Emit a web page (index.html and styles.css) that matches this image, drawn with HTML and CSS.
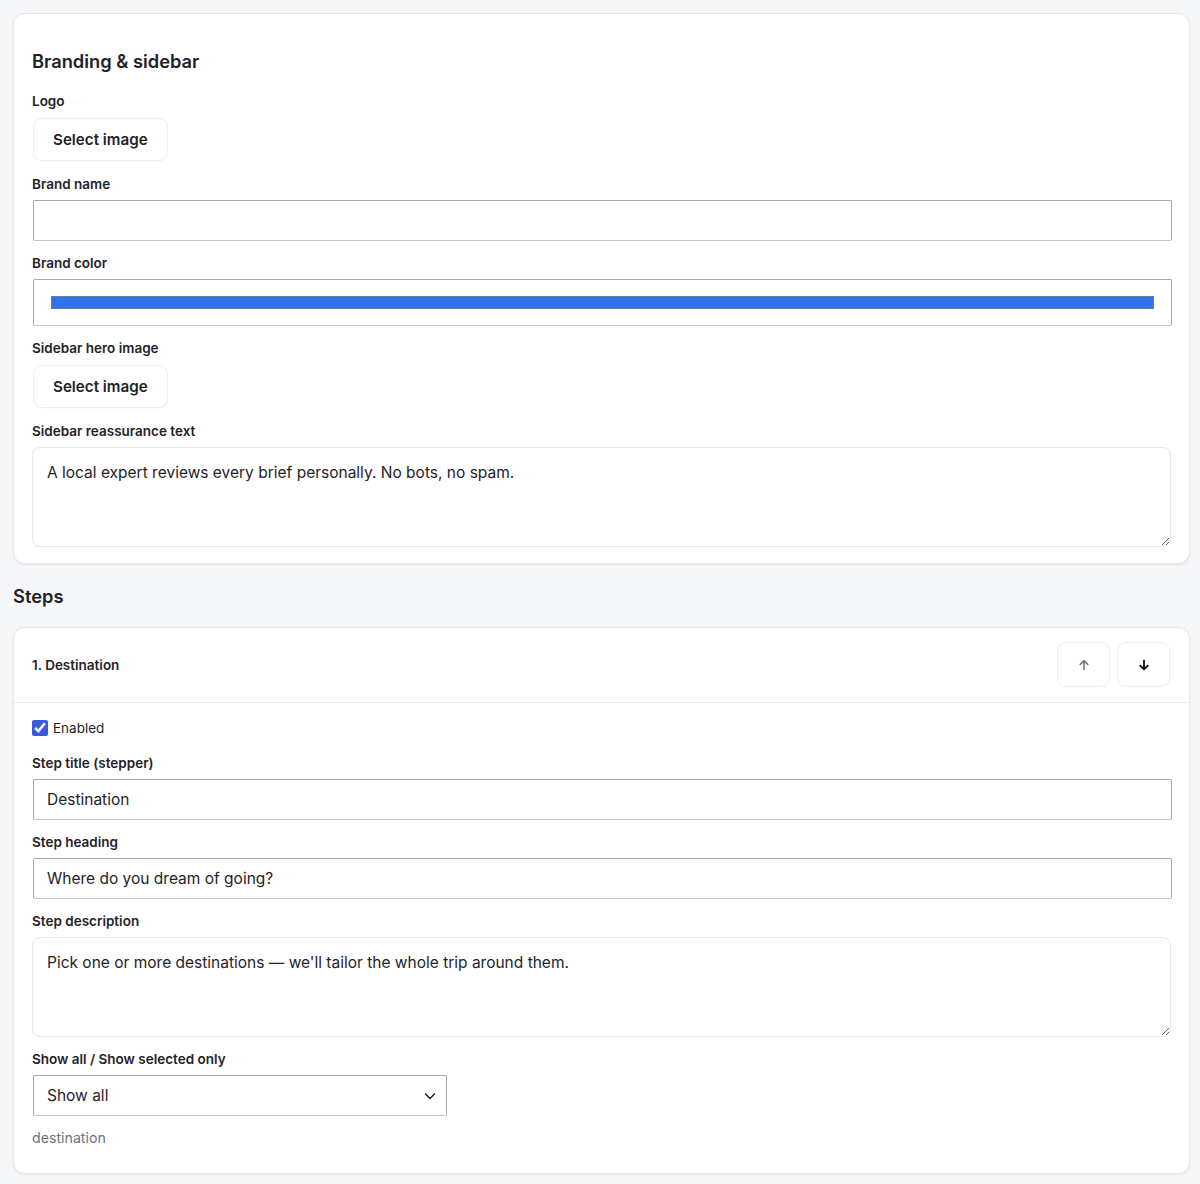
FILE: index.html
```html
<!doctype html>
<html lang="en">
<head>
    <meta charset="UTF-8">
    <meta name="viewport" content="width=device-width,initial-scale=1.0">
    <title>Form settings</title>
    <link rel="stylesheet" href="styles.css">
</head>
<body>
    <div class="page">
        <section class="card card-padded">
            <h2 class="card-title">Branding &amp; sidebar</h2>
            <div class="fields">
                <div class="field">
                    <label class="label">Logo</label>
                    <button class="btn" type="button">Select image</button>
                </div>
                <div class="field">
                    <label class="label" for="brand-name">Brand name</label>
                    <input class="input" id="brand-name" type="text">
                </div>
                <div class="field">
                    <label class="label" for="brand-color">Brand color</label>
                    <input class="color-input" id="brand-color" type="color" value="#2f74ec">
                </div>
                <div class="field">
                    <label class="label">Sidebar hero image</label>
                    <button class="btn" type="button">Select image</button>
                </div>
                <div class="field">
                    <label class="label" for="reassurance">Sidebar reassurance text</label>
                    <textarea class="textarea" id="reassurance">A local expert reviews every brief personally. No bots, no spam.</textarea>
                </div>
            </div>
        </section>

        <h2 class="section-title">Steps</h2>

        <section class="card">
            <div class="step-head">
                <span class="step-name">1. Destination</span>
                <div class="step-actions">
                    <button class="icon-btn is-disabled" type="button" aria-label="Move up">
                        <svg width="12" height="12" viewBox="0 0 12 12"><path d="M6 10.5V1.8M2.2 5.4 6 1.6l3.8 3.8" fill="none" stroke="currentColor" stroke-width="1.6" stroke-linecap="round" stroke-linejoin="round"/></svg>
                    </button>
                    <button class="icon-btn" type="button" aria-label="Move down">
                        <svg width="12" height="12" viewBox="0 0 12 12"><path d="M6 1.5v8.7M2.2 6.6 6 10.4l3.8-3.8" fill="none" stroke="currentColor" stroke-width="1.8" stroke-linecap="round" stroke-linejoin="round"/></svg>
                    </button>
                </div>
            </div>
            <div class="step-body">
                <label class="check">
                    <input type="checkbox" checked>
                    <span>Enabled</span>
                </label>
                <div class="fields">
                    <div class="field">
                        <label class="label" for="step-title">Step title (stepper)</label>
                        <input class="input" id="step-title" type="text" value="Destination">
                    </div>
                    <div class="field">
                        <label class="label" for="step-heading">Step heading</label>
                        <input class="input" id="step-heading" type="text" value="Where do you dream of going?">
                    </div>
                    <div class="field">
                        <label class="label" for="step-desc">Step description</label>
                        <textarea class="textarea" id="step-desc">Pick one or more destinations — we'll tailor the whole trip around them.</textarea>
                    </div>
                    <div class="field">
                        <label class="label" for="step-show">Show all / Show selected only</label>
                        <div class="select-wrap">
                            <select class="select" id="step-show">
                                <option>Show all</option>
                                <option>Show selected only</option>
                            </select>
                            <svg class="select-arrow" width="12" height="12" viewBox="0 0 12 12"><path d="M1.5 4l4.5 4.5L10.5 4" fill="none" stroke="currentColor" stroke-width="1.5" stroke-linecap="round" stroke-linejoin="round"/></svg>
                        </div>
                    </div>
                    <div class="step-key">destination</div>
                </div>
            </div>
        </section>
    </div>
</body>
</html>
```

FILE: styles.css
```css
* {
    box-sizing: border-box;
}

body {
    margin: 0;
    background: #f6f7f9;
    color: #1f2328;
    font-family: Inter, "Noto Sans", sans-serif;
}

.page {
    padding: 13px 10px 10px 13px;
}

.card {
    background: #fff;
    border: 1px solid #e6e8eb;
    border-radius: 12px;
    box-shadow: 0 1px 3px rgba(0, 0, 0, .08);
}

.card-padded {
    padding: 35px 18px 16px;
}

.card-title {
    margin: 0 0 19px;
    font-size: 18.3px;
    line-height: 24px;
    font-weight: 600;
}

.section-title {
    margin: 20px 0 19px;
    font-size: 18.3px;
    line-height: 24px;
    font-weight: 600;
}

.fields {
    display: flex;
    flex-direction: column;
    gap: 13px;
}

.field {
    display: flex;
    flex-direction: column;
    align-items: flex-start;
}

.label {
    display: block;
    margin-bottom: 7px;
    font-size: 13.5px;
    line-height: 18px;
    font-weight: 600;
}

.btn {
    display: block;
    height: 43px;
    margin: 1px 0 1px 1px;
    padding: 0 19px;
    background: #fff;
    border: 1px solid #eceef1;
    border-radius: 9px;
    color: #1f2328;
    font: 600 15.2px Inter, sans-serif;
    box-shadow: 0 1px 1px rgba(0, 0, 0, .02);
}

.input,
.select {
    display: block;
    width: 100%;
    height: 41px;
    padding: 0 13px;
    background: #fff;
    border: 1px solid #a9a9a9;
    border-bottom-color: #c4c4c4;
    border-radius: 2px;
    color: #1f2328;
    font: 15.5px Inter, sans-serif;
}

.field > .input,
.field > .color-input {
    width: 100%;
    margin-left: 1px;
}

.color-input {
    display: block;
    height: 47px;
    margin: 0;
    padding: 0;
    background: #fff;
    border: 1px solid #a9a9a9;
    border-bottom-color: #c4c4c4;
    border-radius: 2px;
}

.color-input::-webkit-color-swatch-wrapper {
    padding: 16px 17px;
}

.color-input::-webkit-color-swatch {
    border: 1px solid #6d7d99;
    border-radius: 0;
}

.textarea {
    display: block;
    width: 100%;
    height: 100px;
    padding: 14px;
    background: #fff;
    border: 1px solid #e6e8eb;
    border-radius: 8px;
    color: #1f2328;
    font: 15.5px/22px Inter, sans-serif;
    resize: vertical;
}

.step-head {
    display: flex;
    align-items: center;
    justify-content: space-between;
    padding: 14px 19px 15px 18px;
    border-bottom: 1px solid #e8eaed;
}

.step-name {
    font-size: 13.5px;
    font-weight: 600;
}

.step-actions {
    display: flex;
    gap: 7px;
}

.icon-btn {
    display: flex;
    align-items: center;
    justify-content: center;
    width: 53px;
    height: 45px;
    padding: 0;
    background: #fff;
    border: 1px solid #eceef1;
    border-radius: 9px;
    color: #111;
}

.icon-btn.is-disabled {
    color: #7a7a7a;
}

.step-body {
    padding: 16px 18px 25px;
}

.check {
    display: flex;
    align-items: center;
    gap: 5px;
    height: 18px;
    margin-bottom: 17px;
    font-size: 13.5px;
}

.check input {
    width: 16px;
    height: 16px;
    margin: 0;
    accent-color: #3b5bdb;
}

.select-wrap {
    position: relative;
    width: 414px;
    margin-left: 1px;
}

.select {
    appearance: none;
    -webkit-appearance: none;
}

.select-arrow {
    position: absolute;
    top: 15px;
    right: 11px;
    color: #222;
    pointer-events: none;
}

.step-key {
    margin-top: -1px;
    color: #6b7280;
    font-size: 14.2px;
    line-height: 20px;
}
```
